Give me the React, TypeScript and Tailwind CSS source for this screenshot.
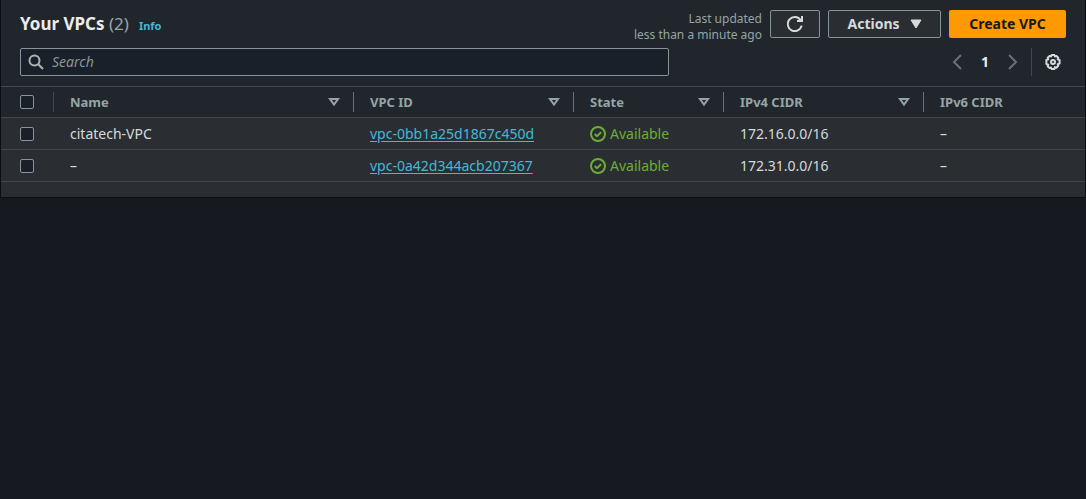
import React, { useState } from "react";

type Vpc = { id: string; name: string; state: string; ipv4: string; ipv6: string };

const vpcs: Vpc[] = [
  { id: "vpc-0bb1a25d1867c450d", name: "citatech-VPC", state: "Available", ipv4: "172.16.0.0/16", ipv6: "–" },
  { id: "vpc-0a42d344acb207367", name: "–", state: "Available", ipv4: "172.31.0.0/16", ipv6: "–" },
];

const columns = [
  { label: "Name", sortable: true },
  { label: "VPC ID", sortable: true },
  { label: "State", sortable: true },
  { label: "IPv4 CIDR", sortable: true },
  { label: "IPv6 CIDR", sortable: false },
];

function SearchIcon() {
  return (
    <svg viewBox="0 0 16 16" className="size-4 shrink-0" fill="none" stroke="#aab7b8" strokeWidth="2" aria-hidden="true">
      <circle cx="6.5" cy="6.5" r="5" />
      <path d="M10.2 10.2 15 15" />
    </svg>
  );
}

function RefreshIcon() {
  return (
    <svg viewBox="0 0 16 16" className="size-4" fill="none" stroke="#d5dbdb" strokeWidth="2" aria-hidden="true">
      <path d="M14.6 9.6A7 7 0 1 1 13.6 4.2L15 5.6" />
      <path d="M15 0v5H10" />
    </svg>
  );
}

function GearIcon() {
  return (
    <svg viewBox="0 0 16 16" className="size-4" fill="none" stroke="#d5dbdb" strokeWidth="2" strokeLinejoin="round" aria-hidden="true">
      <path d="M6.6 1h2.8l.5 1.5 1.5-.6 1.9 1.9-.6 1.5 1.9.7v3.6l-1.9.7.6 1.5-1.9 1.9-1.5-.6L9.4 15H6.6l-.5-1.5-1.5.6-1.9-1.9.6-1.5L1.4 10V6l1.9-.7-.6-1.5 1.9-1.9 1.5.6z" />
      <circle cx="8" cy="8" r="2" />
    </svg>
  );
}

function Chevron({ flip = false }: { flip?: boolean }) {
  return (
    <svg viewBox="0 0 16 16" className="size-4" fill="none" stroke="#687078" strokeWidth="2" aria-hidden="true">
      <path d={flip ? "M4 1l7 7-7 7" : "M12 1L5 8l7 7"} />
    </svg>
  );
}

function SortIcon() {
  return (
    <svg viewBox="0 0 16 16" className="size-4" fill="none" stroke="#95a5a6" strokeWidth="2" aria-hidden="true">
      <path d="M4 5h8l-4 5.5z" />
    </svg>
  );
}

function StatusIcon() {
  return (
    <svg viewBox="0 0 16 16" className="size-4" fill="none" stroke="#6aaf35" strokeWidth="2" aria-hidden="true">
      <circle cx="8" cy="8" r="7" />
      <path d="M4.7 8l2.3 2.2 4.2-4" />
    </svg>
  );
}

function Checkbox({ label, checked, onChange }: { label: string; checked: boolean; onChange: () => void }) {
  return (
    <input
      type="checkbox"
      aria-label={label}
      checked={checked}
      onChange={onChange}
      className="block size-3.5 appearance-none rounded-xs border border-[#879596] bg-[#1a2029] checked:bg-[#44b9d6]"
    />
  );
}

export default function App() {
  const [selected, setSelected] = useState<string[]>([]);
  const [query, setQuery] = useState("");
  const toggle = (id: string) =>
    setSelected((s) => (s.includes(id) ? s.filter((x) => x !== id) : [...s, id]));
  const all = selected.length === vpcs.length;
  const rows = vpcs.filter((v) => Object.values(v).join(" ").toLowerCase().includes(query.toLowerCase()));

  return (
    <div className="min-h-screen bg-[#16191f] font-['Noto_Sans','Open_Sans',sans-serif] text-sm text-[#d5dbdb]">
      <main className="border-x border-b border-[#0c0e12] bg-[#2a2e33] pb-[15px]">
        <header className="bg-[#21252c] px-[19px] py-2.5">
          <div className="flex h-7 items-center justify-between">
            <div className="flex items-baseline">
              <h1 className="text-[17px] leading-7 font-bold text-[#eaeded]">
                Your VPCs <span className="font-normal text-[#95a5a6]">(2)</span>
              </h1>
              <a href="#info" className="ml-2.5 text-[11px] font-bold text-[#44b9d6]">Info</a>
            </div>
            <div className="flex items-center gap-2">
              <p className="pt-1.5 text-right text-xs leading-4 text-[#95a5a6]">
                Last updated
                <br />
                less than a minute ago
              </p>
              <button type="button" aria-label="Refresh" className="flex h-7 w-[50px] items-center justify-center rounded-xs border border-[#879596] bg-[#2a2e33]">
                <RefreshIcon />
              </button>
              <button type="button" className="flex h-7 w-[113px] items-center justify-center gap-2.5 rounded-xs border border-[#879596] bg-[#2a2e33] font-bold">
                Actions
                <svg viewBox="0 0 12 10" className="h-2.5 w-3" fill="#d5dbdb" aria-hidden="true">
                  <path d="M1 1h10L6 9z" stroke="#d5dbdb" />
                </svg>
              </button>
              <button type="button" className="h-7 w-[117px] rounded-xs bg-[#ff9900] font-bold text-[#16191f]">
                Create VPC
              </button>
            </div>
          </div>
          <div className="mt-2.5 flex h-7 items-center justify-between">
            <label className="flex h-7 w-[62%] items-center gap-2 rounded-xs border border-[#879596] bg-[#1a2029] pl-[7px] pr-2">
              <SearchIcon />
              <input
                type="text"
                aria-label="Search"
                placeholder="Search"
                value={query}
                onChange={(e) => setQuery(e.target.value)}
                className="min-w-0 flex-1 bg-transparent outline-none placeholder:text-[#879596] placeholder:italic"
              />
            </label>
            <div className="flex h-7 items-center">
              <button type="button" aria-label="Previous page"><Chevron /></button>
              <button type="button" aria-current="page" className="w-10 text-center font-bold text-[#eaeded]">1</button>
              <button type="button" aria-label="Next page"><Chevron flip /></button>
              <div className="ml-2.5 flex h-7 items-center border-l border-[#414750] pl-[13px] pr-[5px]">
                <button type="button" aria-label="Preferences"><GearIcon /></button>
              </div>
            </div>
          </div>
        </header>
        <table className="w-full table-fixed border-collapse text-left">
          <colgroup>
            <col className="w-[53px]" />
            <col className="w-[300px]" />
            <col className="w-[220px]" />
            <col className="w-[150px]" />
            <col className="w-[200px]" />
            <col />
          </colgroup>
          <thead className="bg-[#21252c] text-[13px] text-[#95a5a6]">
            <tr className="h-[31px] border-y border-[#414750]">
              <th className="p-0">
                <div className="flex h-5 items-center border-r border-[#414750] pl-[19px]">
                  <Checkbox
                    label="Select all VPCs"
                    checked={all}
                    onChange={() => setSelected(all ? [] : vpcs.map((v) => v.id))}
                  />
                </div>
              </th>
              {columns.map((c) => (
                <th key={c.label} scope="col" className="p-0 font-bold">
                  <div className={c.sortable ? "flex h-5 items-center justify-between border-r border-[#687078] pr-[11px] pl-4" : "flex h-5 items-center pl-4"}>
                    {c.label}
                    {c.sortable && (
                      <button type="button" aria-label={`Sort by ${c.label}`}><SortIcon /></button>
                    )}
                  </div>
                </th>
              ))}
            </tr>
          </thead>
          <tbody>
            {rows.map((v) => (
              <tr key={v.id} className="h-8 border-b border-[#414750]">
                <td className="p-0 pl-[19px]">
                  <Checkbox label={`Select ${v.id}`} checked={selected.includes(v.id)} onChange={() => toggle(v.id)} />
                </td>
                <td className="p-0 pl-4">{v.name}</td>
                <td className="p-0 pl-4">
                  <a href={`#${v.id}`} className="text-[#44b9d6] underline underline-offset-2">{v.id}</a>
                </td>
                <td className="p-0 pl-4">
                  <span className="flex items-center gap-1 text-[#6aaf35]">
                    <StatusIcon />
                    {v.state}
                  </span>
                </td>
                <td className="p-0 pl-4">{v.ipv4}</td>
                <td className="p-0 pl-4">{v.ipv6}</td>
              </tr>
            ))}
          </tbody>
        </table>
      </main>
    </div>
  );
}
